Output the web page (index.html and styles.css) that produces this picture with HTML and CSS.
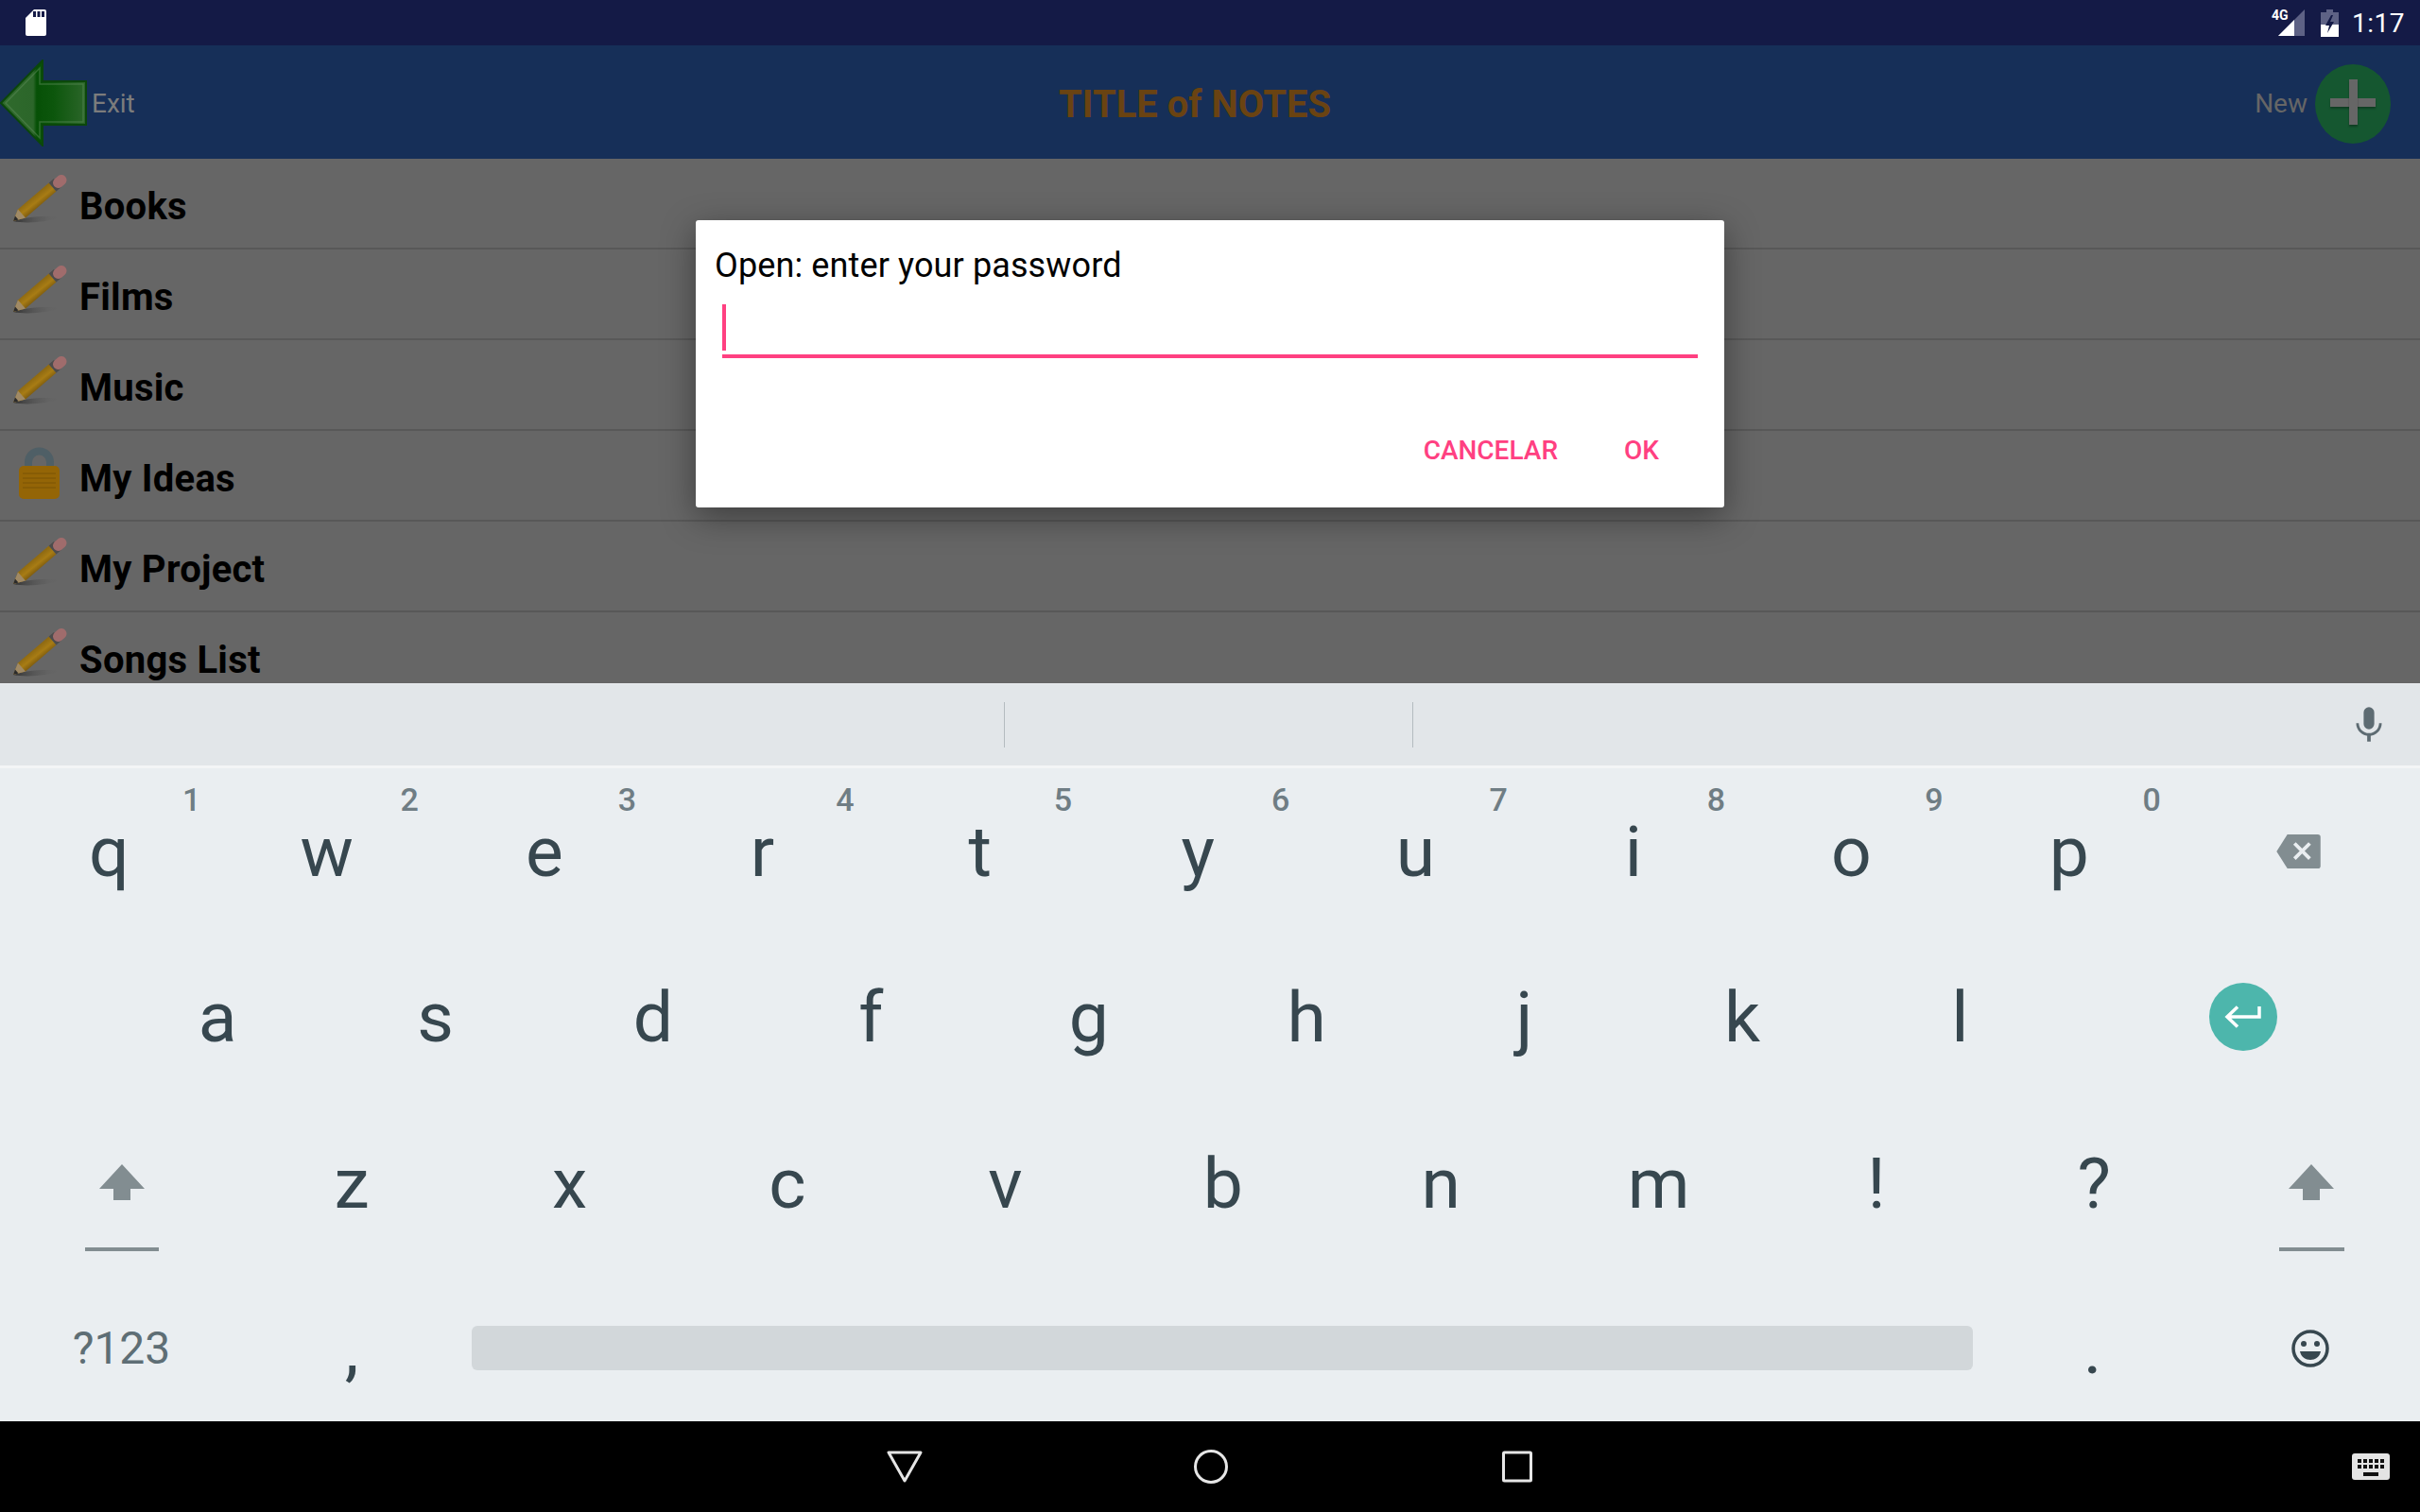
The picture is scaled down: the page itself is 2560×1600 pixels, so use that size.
FILE: index.html
```html
<!DOCTYPE html>
<html lang="en">
<head>
    <meta charset="UTF-8">
    <title>Title of Notes</title>
    <link rel="stylesheet" href="styles.css">
</head>
<body>
    <svg class="defs" width="0" height="0">
        <defs>
            <linearGradient id="pencilBody" gradientUnits="userSpaceOnUse" x1="10" y1="40" x2="18" y2="50">
                <stop offset="0" stop-color="#8f6a12"/>
                <stop offset="0.5" stop-color="#a87c14"/>
                <stop offset="1" stop-color="#7c5a0e"/>
            </linearGradient>
            <linearGradient id="pencilShadow" x1="0" y1="0" x2="1" y2="0">
                <stop offset="0" stop-color="#333"/>
                <stop offset="1" stop-color="#666" stop-opacity="0"/>
            </linearGradient>
            <linearGradient id="arrowFill" x1="0" y1="0" x2="1" y2="0">
                <stop offset="0" stop-color="#2f6a2c"/>
                <stop offset="0.38" stop-color="#2c662a"/>
                <stop offset="0.42" stop-color="#065006"/>
                <stop offset="0.62" stop-color="#0c560c"/>
                <stop offset="1" stop-color="#2c662a"/>
            </linearGradient>
            <symbol id="pencil" viewBox="0 0 64 60">
                <path d="M5 53 C18 48 42 47 54 49 C42 54 18 56 5 53Z" fill="url(#pencilShadow)"/>
                <path d="M5 53 L10 40.500 L42.700 12.500 L50.500 21.500 L18 49.500Z" fill="url(#pencilBody)"/>
                <path d="M5 53 L10 40.500 L18 49.500Z" fill="#a08a66"/>
                <path d="M5 53 L7 47.500 L10.500 51.500Z" fill="#2b2b2b"/>
                <path d="M42.700 12.500 L48 8 L55.800 17 L50.500 21.500Z" fill="#4c4c4c"/>
                <path d="M52.500 12.500 L56 9.500" stroke="#a06c6c" stroke-width="11" stroke-linecap="round"/>
            </symbol>
        </defs>
    </svg>

    <div class="screen">
        <div class="status-bar">
            <svg class="sd-icon" width="24" height="28" viewBox="0 0 24 28">
                <path d="M10 0H21a2 2 0 0 1 2 2V26a2 2 0 0 1-2 2H3a2 2 0 0 1-2-2V9Z" fill="#fff"/>
                <path d="M9 2h3v6H9zM13.500 2h3v6h-3zM18 2h3v6h-3z" fill="#141a46"/>
            </svg>
            <div class="status-right">
                <span class="net-label">4G</span>
                <svg class="signal" width="28" height="28" viewBox="0 0 28 28">
                    <path d="M28 0V28H0Z" fill="#5e6285"/>
                    <path d="M17 11V28H0Z" fill="#fff"/>
                </svg>
                <svg class="battery" width="19" height="29" viewBox="0 0 19 29">
                    <path d="M6 0h7v3h6v26H0V3h6Z" fill="#5e6285"/>
                    <path d="M0 16H19V29H0Z" fill="#fff"/>
                    <path d="M11 6 L5 17 H9 L7 25 L14 13 H10 L13 6Z" fill="#141a46"/>
                </svg>
                <span class="clock">1:17</span>
            </div>
        </div>

        <header class="app-bar">
            <div class="bar-left">
                <svg class="exit-arrow" width="94" height="92" viewBox="0 0 94 92">
                    <path d="M45 1 V23 H91 V69 H45 V91 L1 46Z" fill="url(#arrowFill)" stroke="#0b470b" stroke-width="2"/>
                    <path d="M42 9 V26 H88 V66 H42 V83 L6 46Z" fill="none" stroke="#5c8a58" stroke-width="1.500" opacity="0.5"/>
                </svg>
                <span class="bar-label">Exit</span>
            </div>
            <h1 class="bar-title">TITLE of NOTES</h1>
            <div class="bar-right">
                <span class="bar-label new-label">New</span>
                <div class="new-btn"><span class="plus-h"></span><span class="plus-v"></span></div>
            </div>
        </header>

        <ul class="note-list">
            <li class="note"><svg class="note-icon"><use href="#pencil"/></svg><span>Books</span></li>
            <li class="note"><svg class="note-icon"><use href="#pencil"/></svg><span>Films</span></li>
            <li class="note"><svg class="note-icon"><use href="#pencil"/></svg><span>Music</span></li>
            <li class="note">
                <svg class="note-icon" viewBox="0 0 64 60">
                    <path d="M21 26 V20 a11.500 11.500 0 0 1 23 0 V26" fill="none" stroke="#4f5f66" stroke-width="8"/>
                    <rect x="11" y="24" width="43" height="35" rx="5" fill="#946506"/>
                    <path d="M15 32H50M15 37H50M15 42H50M15 47H50" stroke="#875c05" stroke-width="2"/>
                </svg>
                <span>My Ideas</span>
            </li>
            <li class="note"><svg class="note-icon"><use href="#pencil"/></svg><span>My Project</span></li>
            <li class="note"><svg class="note-icon"><use href="#pencil"/></svg><span>Songs List</span></li>
        </ul>

        <div class="dialog">
            <div class="dialog-title">Open: enter your password</div>
            <div class="dialog-input"><span class="caret"></span></div>
            <div class="dialog-actions">
                <span class="dialog-btn">CANCELAR</span>
                <span class="dialog-btn">OK</span>
            </div>
        </div>

        <div class="suggestions">
            <div class="suggestion"></div>
            <div class="suggestion"></div>
            <div class="suggestion mic-cell">
                <svg width="28" height="38" viewBox="0 0 30 40">
                    <rect x="9" y="0" width="12" height="25" rx="6" fill="#5d6b72"/>
                    <path d="M2 18 a13 13 0 0 0 26 0" fill="none" stroke="#5d6b72" stroke-width="3"/>
                    <rect x="13" y="30" width="4" height="9" fill="#5d6b72"/>
                </svg>
            </div>
        </div>

        <div class="keyboard">
            <div class="key-row row-1">
                <div class="key"><sup>1</sup>q</div>
                <div class="key"><sup>2</sup>w</div>
                <div class="key"><sup>3</sup>e</div>
                <div class="key"><sup>4</sup>r</div>
                <div class="key"><sup>5</sup>t</div>
                <div class="key"><sup>6</sup>y</div>
                <div class="key"><sup>7</sup>u</div>
                <div class="key"><sup>8</sup>i</div>
                <div class="key"><sup>9</sup>o</div>
                <div class="key"><sup>0</sup>p</div>
                <div class="key fn-key">
                    <svg width="48" height="36" viewBox="0 0 50 38">
                        <path d="M12 0H46a3 3 0 0 1 3 3V35a3 3 0 0 1-3 3H12L0 19Z" fill="#828d91"/>
                        <path d="M20 10L37 27M37 10L20 27" stroke="#eaeef1" stroke-width="4"/>
                    </svg>
                </div>
            </div>
            <div class="key-row row-2">
                <div class="key">a</div>
                <div class="key">s</div>
                <div class="key">d</div>
                <div class="key">f</div>
                <div class="key">g</div>
                <div class="key">h</div>
                <div class="key">j</div>
                <div class="key">k</div>
                <div class="key">l</div>
                <div class="key fn-key enter-key">
                    <div class="enter-btn">
                        <svg width="40" height="24" viewBox="0 0 40 24">
                            <path d="M37 1V12H4M14 1.500L3 12L14 22.500" fill="none" stroke="#fff" stroke-width="3.500"/>
                        </svg>
                    </div>
                </div>
            </div>
            <div class="key-row row-3">
                <div class="key fn-key shift-key">
                    <svg width="48" height="38" viewBox="0 0 48 38"><path d="M24 0L48 26H33V38H15V26H0Z" fill="#828d91"/></svg>
                    <span class="shift-line"></span>
                </div>
                <div class="key">z</div>
                <div class="key">x</div>
                <div class="key">c</div>
                <div class="key">v</div>
                <div class="key">b</div>
                <div class="key">n</div>
                <div class="key">m</div>
                <div class="key">!</div>
                <div class="key">?</div>
                <div class="key fn-key shift-key">
                    <svg width="48" height="38" viewBox="0 0 48 38"><path d="M24 0L48 26H33V38H15V26H0Z" fill="#828d91"/></svg>
                    <span class="shift-line"></span>
                </div>
            </div>
            <div class="key-row row-4">
                <div class="key fn-key symbols">?123</div>
                <div class="key punct">,</div>
                <div class="key space-key"><span class="space-bar"></span></div>
                <div class="key punct">.</div>
                <div class="key fn-key">
                    <svg width="40" height="40" viewBox="0 0 40 40">
                        <circle cx="20" cy="20" r="18" fill="none" stroke="#37474f" stroke-width="3.500"/>
                        <circle cx="13" cy="15" r="3" fill="#37474f"/>
                        <circle cx="27" cy="15" r="3" fill="#37474f"/>
                        <path d="M9 23H31C29 35 11 35 9 23Z" fill="#37474f"/>
                    </svg>
                </div>
            </div>
        </div>

        <nav class="nav-bar">
            <svg class="nav-icon" width="38" height="34" viewBox="0 0 38 34">
                <path d="M2 2H36L19 32Z" fill="none" stroke="#e6e6e6" stroke-width="3" stroke-linejoin="round"/>
            </svg>
            <svg class="nav-icon" width="38" height="38" viewBox="0 0 38 38">
                <circle cx="19" cy="19" r="16.500" fill="none" stroke="#e6e6e6" stroke-width="3"/>
            </svg>
            <svg class="nav-icon" width="34" height="34" viewBox="0 0 34 34">
                <rect x="1.500" y="2" width="29" height="30" rx="1" fill="none" stroke="#e6e6e6" stroke-width="3"/>
            </svg>
            <svg class="ime-icon" width="40" height="28" viewBox="0 0 40 28">
                <rect width="40" height="28" rx="3" fill="#e4e4e4"/>
                <path d="M6 6h4v4H6zM12 6h4v4h-4zM18 6h4v4h-4zM24 6h4v4h-4zM30 6h4v4h-4zM6 12h4v4H6zM12 12h4v4h-4zM18 12h4v4h-4zM24 12h4v4h-4zM30 12h4v4h-4zM12 20h16v4H12z" fill="#111"/>
            </svg>
        </nav>
    </div>
</body>
</html>
```

FILE: styles.css
```css
* {
    box-sizing: border-box;
}
html, body {
    margin: 0;
    padding: 0;
}
body {
    width: 2560px;
    height: 1600px;
    overflow: hidden;
    font-family: Roboto, "Liberation Sans", sans-serif;
    background: #000;
}
.defs {
    position: absolute;
}
.screen {
    position: relative;
    width: 2560px;
    height: 1600px;
    display: flex;
    flex-direction: column;
}

/* status bar */
.status-bar {
    height: 48px;
    background: #141a46;
    display: flex;
    align-items: center;
    justify-content: space-between;
    padding: 0 16px 0 26px;
}
.status-right {
    display: flex;
    align-items: center;
    position: relative;
    height: 48px;
}
.net-label {
    position: absolute;
    left: 0;
    top: 8px;
    color: #fff;
    font-size: 14px;
    font-weight: 700;
}
.signal {
    margin: 0 17px 0 7px;
}
.battery {
    margin-right: 14px;
}
.clock {
    color: #fff;
    font-size: 28px;
    letter-spacing: 0.5px;
}

/* app bar */
.app-bar {
    height: 120px;
    background: #162f58;
    display: flex;
    align-items: center;
    justify-content: space-between;
    position: relative;
    padding-right: 31px;
}
.bar-left, .bar-right {
    display: flex;
    align-items: center;
}
.exit-arrow {
    margin: 2px 3px 0 0;
}
.bar-label {
    color: #7c7c7c;
    font-size: 28px;
    margin-top: 3px;
}
.new-label {
    color: #666;
    margin-right: 8px;
}
.bar-title {
    position: absolute;
    left: 1120px;
    top: 41px;
    margin: 0;
    color: #6a4312;
    font-size: 40px;
    font-weight: 700;
    line-height: 44px;
}
.new-btn {
    position: relative;
    width: 80px;
    height: 84px;
    margin-top: 4px;
    border-radius: 50%;
    background: #155730;
}
.plus-h, .plus-v {
    position: absolute;
    background: #666;
    box-shadow: 0 2px 2px rgba(0, 0, 0, 0.3);
}
.plus-h {
    left: 16px;
    top: 36px;
    width: 48px;
    height: 9px;
}
.plus-v {
    left: 36px;
    top: 16px;
    width: 9px;
    height: 48px;
}

/* notes */
.note-list {
    list-style: none;
    margin: 0;
    padding: 0;
    height: 555px;
    overflow: hidden;
    background: #666;
}
.note {
    height: 96px;
    border-bottom: 2px solid #585858;
    display: flex;
    align-items: center;
    padding-left: 9px;
    color: #000;
    font-size: 40px;
    font-weight: 700;
    letter-spacing: 0.25px;
}
.note span {
    padding-top: 6px;
}
.note-icon {
    width: 64px;
    height: 60px;
    margin: 0 11px 8px 0;
    flex: none;
    filter: blur(0.6px);
}

/* password dialog */
.dialog {
    position: absolute;
    left: 736px;
    top: 233px;
    width: 1088px;
    height: 304px;
    background: #fff;
    border-radius: 3px;
    box-shadow: 0 10px 36px rgba(0, 0, 0, 0.4);
    padding: 28px 28px 0 20px;
}
.dialog-title {
    font-size: 36px;
    letter-spacing: 0.12px;
    line-height: 40px;
    color: #000;
}
.dialog-input {
    margin: 17px 0 0 8px;
    height: 61px;
    padding-top: 4px;
    border-bottom: 4px solid #ff4081;
}
.caret {
    display: block;
    width: 4px;
    height: 49px;
    background: #ff4081;
}
.dialog-actions {
    display: flex;
    justify-content: flex-end;
    gap: 70px;
    padding: 81px 41px 0 0;
}
.dialog-btn {
    color: #ff4081;
    font-size: 28px;
    font-weight: 500;
}

/* keyboard */
.suggestions {
    height: 90px;
    background: #e2e6e9;
    border-top: 1px solid #e9ecef;
    border-bottom: 3px solid #f3f5f6;
    display: flex;
    align-items: center;
}
.suggestion {
    height: 48px;
    display: flex;
    align-items: center;
}
.suggestion:nth-child(1) {
    width: 1063px;
    border-right: 1px solid #b4bcc0;
}
.suggestion:nth-child(2) {
    width: 432px;
    border-right: 1px solid #b4bcc0;
}
.mic-cell {
    flex: 1;
    justify-content: flex-end;
    padding-right: 40px;
}
.keyboard {
    height: 691px;
    background: #eaeef1;
    display: grid;
    grid-template-rows: 171px 176px 176px 168px;
    color: #37474f;
}
.key-row {
    display: flex;
}
.key {
    width: 230.4px;
    position: relative;
    display: flex;
    align-items: center;
    justify-content: center;
    font-size: 75px;
    padding-top: 8px;
}
.row-1 .key {
    padding-top: 5px;
}
.key sup {
    position: absolute;
    top: 13px;
    right: 18px;
    font-size: 34px;
    line-height: 40px;
    font-weight: 500;
    color: #6f7d84;
}
.row-1 .fn-key {
    flex: 1;
    padding: 4px 0 0;
}
.row-2 {
    padding-left: 115px;
}
.enter-key {
    flex: 1;
    justify-content: flex-start;
    padding-left: 148px;
}
.enter-btn {
    width: 72px;
    height: 72px;
    border-radius: 50%;
    background: #4db6ac;
    display: flex;
    align-items: center;
    justify-content: center;
}
.shift-key {
    flex-direction: column;
    width: 257px;
    gap: 50px;
    padding-top: 60px;
}
.row-3 .shift-key:last-child {
    width: 229px;
}
.shift-line {
    width: 78px;
    height: 4px;
    background: #828d91;
}
.row-3 .shift-key:last-child .shift-line {
    width: 69px;
}
.row-4 .fn-key {
    padding-top: 13px;
}
.row-4 .symbols {
    width: 257px;
    font-size: 48px;
    color: #5e6e75;
}
.punct {
    padding: 22px 0 8px;
}
.space-key {
    width: 1611px;
    padding: 12px 0 0;
}
.space-bar {
    width: 1588px;
    height: 47px;
    border-radius: 6px;
    background: #d2d7da;
}

/* nav bar */
.nav-bar {
    height: 96px;
    background: #000;
    position: relative;
    display: flex;
    align-items: center;
    justify-content: center;
    gap: 286px;
}
.nav-icon:nth-child(3) {
    margin-left: 3px;
}
.ime-icon {
    position: absolute;
    right: 32px;
    top: 34px;
}
```
